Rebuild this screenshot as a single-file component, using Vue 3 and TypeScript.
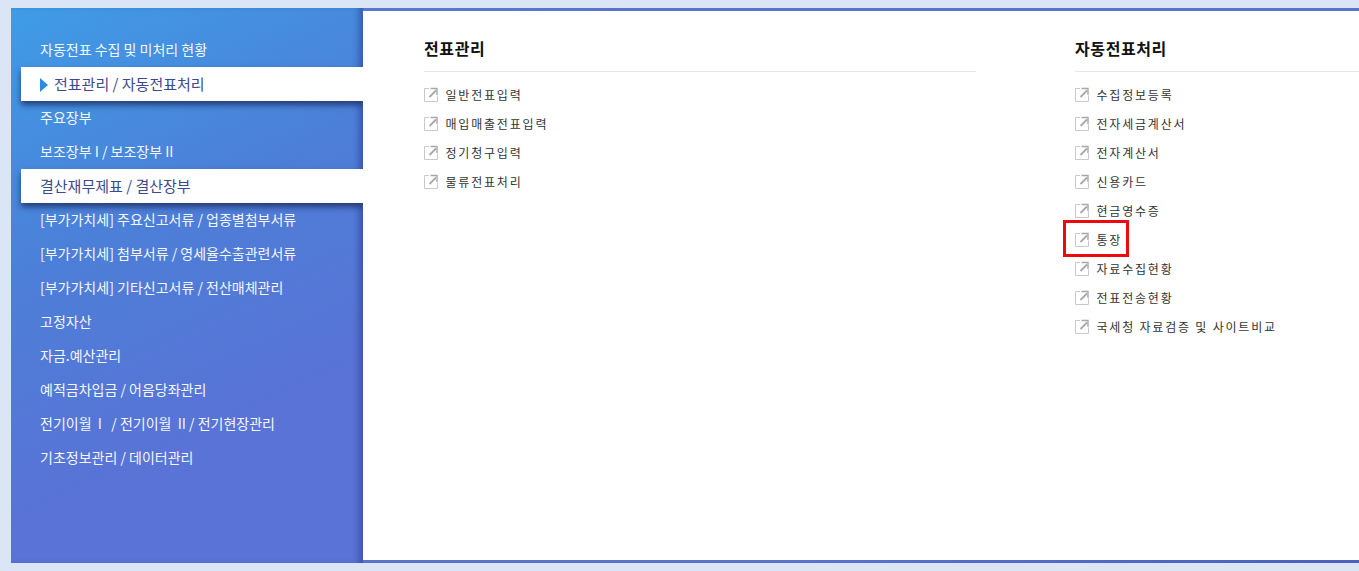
<template>
  <div class="page">
    <div class="shell">
      <ul class="side">
        <li
          v-for="(item, i) in sideItems"
          :key="i"
          class="side-item"
          :class="{ 'is-white': item.white }"
        >
          <span v-if="item.arrow" class="arrow"></span>{{ item.label }}
        </li>
      </ul>
      <div class="main">
        <section v-for="col in columns" :key="col.title" class="col">
          <h2 class="col-title">{{ col.title }}</h2>
          <ul class="links">
            <li v-for="link in col.links" :key="link" class="link">
              <svg class="link-icon" width="14" height="15" viewBox="0 0 14 15" fill="none">
                <path d="M5 1.5H.5v13h13V8.5" stroke="#c9c9c9" />
                <path d="M5.5 10 12 3.5" stroke="#a8a8a8" stroke-width="1.8" />
                <path d="M6.5 1.5h6.5V8" stroke="#a8a8a8" stroke-width="1.4" />
              </svg>
              <span class="link-text">{{ link }}</span>
              <i v-if="link === marked" class="mark"></i>
            </li>
          </ul>
        </section>
      </div>
    </div>
  </div>
</template>

<script setup lang="ts">
interface SideItem {
  label: string
  white?: boolean
  arrow?: boolean
}

const marked = '통장'

const sideItems: SideItem[] = [
  { label: '자동전표 수집 및 미처리 현황' },
  { label: '전표관리 / 자동전표처리', white: true, arrow: true },
  { label: '주요장부' },
  { label: '보조장부 I / 보조장부 II' },
  { label: '결산재무제표 / 결산장부', white: true },
  { label: '[부가가치세] 주요신고서류 / 업종별첨부서류' },
  { label: '[부가가치세] 첨부서류 / 영세율수출관련서류' },
  { label: '[부가가치세] 기타신고서류 / 전산매체관리' },
  { label: '고정자산' },
  { label: '자금.예산관리' },
  { label: '예적금차입금 / 어음당좌관리' },
  { label: '전기이월 \u00a0I\u00a0\u00a0 / 전기이월 \u00a0II / 전기현장관리' },
  { label: '기초정보관리 / 데이터관리' }
]

const columns = [
  {
    title: '전표관리',
    links: ['일반전표입력', '매입매출전표입력', '정기청구입력', '물류전표처리']
  },
  {
    title: '자동전표처리',
    links: [
      '수집정보등록',
      '전자세금계산서',
      '전자계산서',
      '신용카드',
      '현금영수증',
      '통장',
      '자료수집현황',
      '전표전송현황',
      '국세청 자료검증 및 사이트비교'
    ]
  }
]
</script>

<style>
html,
body {
  margin: 0;
  overflow: hidden;
  background: #dae6f5;
}
</style>

<style scoped>
.page {
  height: 571px;
  padding: 8px 0 8px 11px;
  box-sizing: border-box;
  font-family: "Noto Sans CJK KR", "Noto Sans", sans-serif;
  overflow: hidden;
}

.shell {
  display: flex;
  height: 555px;
  background: linear-gradient(175deg, #5583d0 0%, #5b74c8 8%, #5a74cc 92%, #4c5ec0 100%);
}

.side {
  width: 352px;
  flex: none;
  margin: 0;
  padding: 25px 0 0 10px;
  box-sizing: border-box;
  list-style: none;
  background: linear-gradient(155deg, #3f9ce6 0%, #4c7fd8 38%, #5973d6 72%, #5973d6 100%);
  box-shadow: inset -7px 0 6px -3px rgba(30, 45, 110, 0.45);
}

.side-item {
  height: 34px;
  line-height: 33px;
  padding-left: 19px;
  font-size: 14px;
  color: #f4f7fd;
  white-space: nowrap;
}

.side-item.is-white {
  position: relative;
  background: #fff;
  color: #3a4a8c;
  font-size: 15px;
  box-shadow: 0 4px 6px rgba(20, 30, 80, 0.7);
}

.arrow {
  display: inline-block;
  width: 0;
  height: 0;
  margin-right: 6px;
  border-left: 8px solid #2b8ae6;
  border-top: 7px solid transparent;
  border-bottom: 7px solid transparent;
  vertical-align: -2px;
}

.main {
  position: relative;
  z-index: 1;
  flex: 1;
  min-width: 0;
  display: flex;
  gap: 99px;
  margin: 3px 0;
  padding: 22px 0 0 61px;
  background: #fff;
  overflow: hidden;
}

.col {
  width: 552px;
  flex: none;
}

.col-title {
  margin: 0;
  height: 38px;
  line-height: 30px;
  font-size: 16px;
  font-weight: 700;
  letter-spacing: 0.6px;
  color: #111;
  border-bottom: 1px solid #e6e6e6;
}

.links {
  margin: 8px 0 0;
  padding: 0;
  list-style: none;
}

.link {
  position: relative;
  display: flex;
  align-items: center;
  height: 29px;
  font-size: 12px;
  letter-spacing: 1.8px;
  color: #333;
}

.link-icon {
  margin-right: 7.5px;
  flex: none;
}

.link-text {
  margin-bottom: 1px;
}

.mark {
  position: absolute;
  left: -12px;
  top: -5px;
  width: 60px;
  height: 31px;
  border: 3px solid #ec0a10;
}
</style>
